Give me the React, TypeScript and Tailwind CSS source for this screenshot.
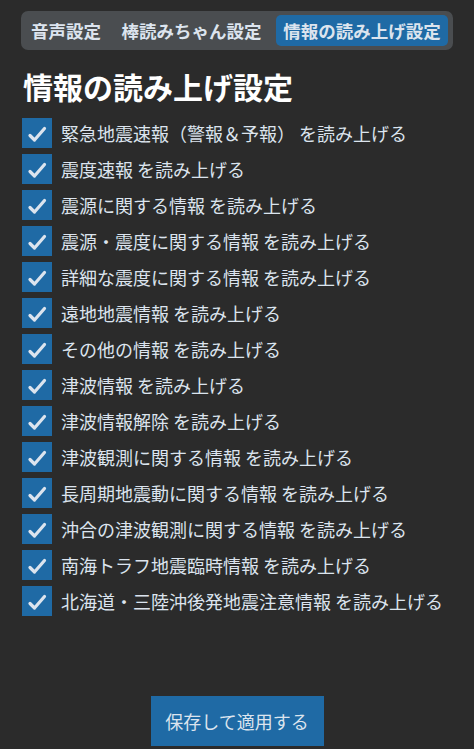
import React, { useState } from "react";

const tabs: { label: string; width: string }[] = [
  { label: "音声設定", width: "w-[82px]" },
  { label: "棒読みちゃん設定", width: "w-[155px]" },
  { label: "情報の読み上げ設定", width: "w-[172px]" },
];

const items: string[] = [
  "緊急地震速報（警報＆予報） を読み上げる",
  "震度速報 を読み上げる",
  "震源に関する情報 を読み上げる",
  "震源・震度に関する情報 を読み上げる",
  "詳細な震度に関する情報 を読み上げる",
  "遠地地震情報 を読み上げる",
  "その他の情報 を読み上げる",
  "津波情報 を読み上げる",
  "津波情報解除 を読み上げる",
  "津波観測に関する情報 を読み上げる",
  "長周期地震動に関する情報 を読み上げる",
  "沖合の津波観測に関する情報 を読み上げる",
  "南海トラフ地震臨時情報 を読み上げる",
  "北海道・三陸沖後発地震注意情報 を読み上げる",
];

const font = {
  fontFamily: '"Noto Sans CJK JP", "Noto Sans", sans-serif',
};

const CheckRow = ({
  label,
  checked,
  onToggle,
}: {
  label: string;
  checked: boolean;
  onToggle: () => void;
}) => (
  <button
    type="button"
    onClick={onToggle}
    className="flex h-[30px] items-center gap-[9px] text-left"
  >
    <span
      className={
        checked
          ? "flex h-[30px] w-[30px] shrink-0 items-center justify-center bg-[#1f6aa5]"
          : "flex h-[30px] w-[30px] shrink-0 items-center justify-center border-[3px] border-[#949a9f]"
      }
    >
      {checked && (
        <svg width="30" height="30" viewBox="0 0 30 30">
          <path
            d="M8 17.5 L12.5 22 L22.5 10.5"
            fill="none"
            stroke="#dce4ee"
            strokeWidth="3.2"
            strokeLinecap="round"
            strokeLinejoin="round"
          />
        </svg>
      )}
    </span>
    <span className="whitespace-nowrap text-[18px] leading-[30px] text-[#dce4ee]">
      {label}
    </span>
  </button>
);

export default function App() {
  const [active, setActive] = useState(2);
  const [checks, setChecks] = useState<boolean[]>(items.map(() => true));

  return (
    <div
      className="flex h-[749px] w-[474px] flex-col bg-[#2b2b2b] px-[21px] pt-[11px]"
      style={font}
    >
      <div className="flex h-[39px] items-center gap-[7px] rounded-[7px] bg-[#4a4d50] px-[4px]">
        {tabs.map((tab, index) => (
          <button
            key={index}
            type="button"
            onClick={() => setActive(index)}
            className={
              (index === active ? "bg-[#1f6aa5] " : "") +
              tab.width +
              " h-[31px] shrink-0 whitespace-nowrap rounded-[5px] text-center text-[17.5px] font-bold leading-[31px] text-[#dce4ee]"
            }
          >
            {tab.label}
          </button>
        ))}
      </div>

      <h1 className="mt-[18px] pl-[2px] text-[30px] font-bold leading-[36px] text-white">
        情報の読み上げ設定
      </h1>

      <div className="mt-[14px] flex flex-col gap-[6px] pl-[1px]">
        {items.map((item, index) => (
          <CheckRow
            key={index}
            label={item}
            checked={checks[index]}
            onToggle={() =>
              setChecks(checks.map((c, i) => (i === index ? !c : c)))
            }
          />
        ))}
      </div>

      <div className="mt-[80px] flex justify-center">
        <button
          type="button"
          className="h-[50px] w-[173px] bg-[#1f6aa5] text-[18px] text-[#dce4ee]"
        >
          保存して適用する
        </button>
      </div>
    </div>
  );
}
